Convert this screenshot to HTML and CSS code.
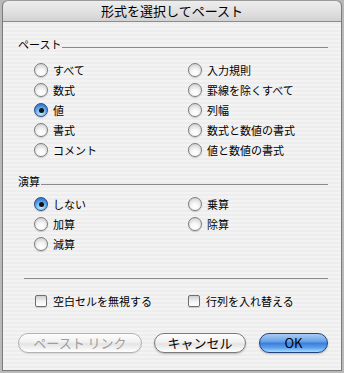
FILE: index.html
```html
<!DOCTYPE html>
<html lang="ja">
<head>
<meta charset="utf-8">
<link rel="stylesheet" href="styles.css">
</head>
<body>
<div class="window">
  <div class="titlebar">形式を選択してペースト</div>
  <div class="content">
    <div class="group-head"><span class="group-label">ペースト</span><span class="rule"></span></div>
    <div class="options paste">
      <div class="opt"><span class="radio"></span>すべて</div>
      <div class="opt"><span class="radio"></span>数式</div>
      <div class="opt"><span class="radio on"></span>値</div>
      <div class="opt"><span class="radio"></span>書式</div>
      <div class="opt"><span class="radio"></span>コメント</div>
      <div class="opt"><span class="radio"></span>入力規則</div>
      <div class="opt"><span class="radio"></span>罫線を除くすべて</div>
      <div class="opt"><span class="radio"></span>列幅</div>
      <div class="opt"><span class="radio"></span>数式と数値の書式</div>
      <div class="opt"><span class="radio"></span>値と数値の書式</div>
    </div>
    <div class="group-head op-head"><span class="group-label">演算</span><span class="rule"></span></div>
    <div class="options ops">
      <div class="opt"><span class="radio on"></span>しない</div>
      <div class="opt"><span class="radio"></span>加算</div>
      <div class="opt"><span class="radio"></span>減算</div>
      <div class="opt"><span class="radio"></span>乗算</div>
      <div class="opt"><span class="radio"></span>除算</div>
    </div>
    <div class="separator"></div>
    <div class="checks">
      <div class="opt"><span class="check"></span>空白セルを無視する</div>
      <div class="opt"><span class="check"></span>行列を入れ替える</div>
    </div>
    <div class="buttons">
      <div class="btn disabled link">ペースト リンク</div>
      <div class="btn cancel">キャンセル</div>
      <div class="btn default ok">OK</div>
    </div>
  </div>
</div>
</body>
</html>
```
FILE: styles.css
```css
html, body {
  margin: 0;
  padding: 0;
}
body {
  width: 344px;
  height: 373px;
  background: #b9b9b9;
  font-family: "Noto Sans CJK JP", "Noto Sans", sans-serif;
  color: #000;
  overflow: hidden;
}
.window {
  margin-left: 2px;
  width: 340px;
  height: 371px;
  box-sizing: border-box;
  border: 1px solid #7c7c7c;
  border-top: none;
  border-radius: 6px 6px 0 0;
  overflow: hidden;
  display: flex;
  flex-direction: column;
}
.titlebar {
  height: 22px;
  box-sizing: border-box;
  border-top: 1px solid #9a9a9a;
  border-bottom: 1px solid #8c8c8c;
  border-radius: 6px 6px 0 0;
  background: linear-gradient(#ededed, #e2e2e2 50%, #d2d2d2);
  font-size: 13px;
  line-height: 20px;
  text-align: center;
}
.content {
  flex: 1;
  padding: 15px 13px 0 15px;
  background: repeating-linear-gradient(#ededed 0, #ededed 2px, #f3f3f3 2px, #f3f3f3 4px);
  font-size: 11px;
}
.group-head {
  display: flex;
  height: 14px;
  line-height: 14px;
}
.group-label {
  margin-right: 1px;
}
.rule {
  flex: 1;
  align-self: flex-end;
  height: 1px;
  margin-bottom: 3px;
  background: #8a8a8a;
}
.options {
  display: grid;
  grid-auto-flow: column;
  grid-template-columns: 154px 1fr;
  margin-left: 16px;
}
.paste {
  grid-template-rows: repeat(5, 20px);
  margin-top: 9px;
}
.op-head {
  margin-top: 14px;
}
.ops {
  grid-template-rows: repeat(3, 20px);
  margin-top: 6px;
}
.opt {
  display: flex;
  align-items: center;
  gap: 5px;
  white-space: nowrap;
}
.radio {
  width: 14px;
  height: 14px;
  box-sizing: border-box;
  border-radius: 50%;
  border: 1px solid #7d7d7d;
  background: radial-gradient(circle at 50% 75%, #ffffff 0, #f7f7f7 35%, #d9d9d9 75%, #b5b5b5 100%);
  box-shadow: 0 1px 1px rgba(0,0,0,0.18);
  position: relative;
  flex: none;
}
.radio.on {
  border-color: #2c4f8a;
  background: radial-gradient(circle at 50% 78%, #c8ecff 0, #7fc0f5 35%, #3f87dc 70%, #2a63b8 100%);
}
.radio.on::after {
  content: "";
  position: absolute;
  left: 3.5px;
  top: 3.5px;
  width: 5px;
  height: 5px;
  border-radius: 50%;
  background: #111;
}
.separator {
  height: 1px;
  background: #8a8a8a;
  margin: 24px 0 0 6px;
}
.checks {
  display: grid;
  grid-template-columns: 153px 1fr;
  margin: 14px 0 0 17px;
  height: 16px;
}
.checks .opt {
  gap: 6px;
}
.check {
  width: 12px;
  height: 12px;
  box-sizing: border-box;
  border: 1px solid #6f6f6f;
  border-radius: 2px;
  background: linear-gradient(#cfcfcf, #f4f4f4 55%, #ffffff);
  box-shadow: 0 1px 1px rgba(0,0,0,0.15);
  flex: none;
}
.buttons {
  display: flex;
  margin-top: 24px;
  gap: 12px;
}
.btn {
  height: 20px;
  box-sizing: border-box;
  border-radius: 10px;
  border: 1px solid #7a7a7a;
  background: linear-gradient(#fdfdfd, #f1f1f1 45%, #e3e3e3 55%, #f6f6f6 85%, #ffffff);
  box-shadow: 0 1px 2px rgba(0,0,0,0.25);
  font-size: 13px;
  line-height: 18px;
  text-align: center;
  white-space: nowrap;
}
.link {
  width: 124px;
}
.cancel {
  width: 92px;
}
.ok {
  width: 69px;
  margin-left: 1px;
}
.disabled {
  color: #9d9d9d;
  border-color: #b2b2b2;
  box-shadow: 0 1px 1px rgba(0,0,0,0.1);
}
.default {
  border-color: #22437c;
  background: linear-gradient(#a9cdf4, #6ba4ea 40%, #3c7fdb 52%, #5b9eec 75%, #a4dcff);
}
```
